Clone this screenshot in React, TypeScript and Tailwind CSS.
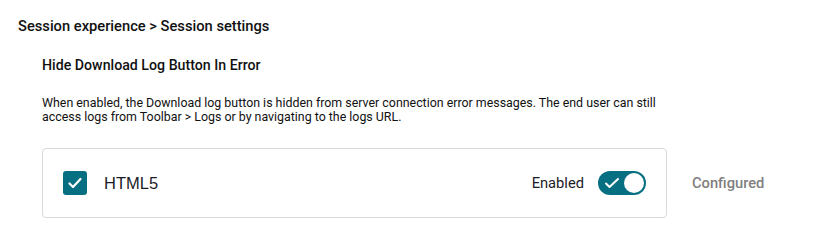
export default function App() {
  return (
    <div className="h-[244px] w-[835px] bg-white font-['Roboto',sans-serif] text-[#111]">
      <div className="px-[18px] pt-[16px]">
        <h1 className="text-[14.7px] font-medium leading-[20px]">
          Session experience &gt; Session settings
        </h1>
        <div className="pl-[24px] pt-[19px]">
          <h2 className="text-[14.2px] font-medium leading-[20px]">
            Hide Download Log Button In Error
          </h2>
          <p className="mt-[21px] text-[12.4px] leading-[14px]">
            When enabled, the Download log button is hidden from server connection error messages. The end user can still
            <br />
            access logs from Toolbar &gt; Logs or by navigating to the logs URL.
          </p>
          <div className="mt-[24px] flex items-center">
            <div className="flex h-[70px] w-[625px] items-center rounded-[4px] border border-[#d9d9d9] pl-[20px] pr-[20px]">
              <span className="flex h-[24px] w-[24px] items-center justify-center rounded-[3px] bg-[#076f82]">
                <svg width="18" height="18" viewBox="0 0 18 18" fill="none">
                  <path d="M3.5 9.5l3.5 3.5L14.5 5" stroke="white" strokeWidth="2.2" strokeLinecap="round" strokeLinejoin="round" />
                </svg>
              </span>
              <span className="ml-[17px] font-['Liberation_Sans',sans-serif] text-[16.5px] text-[#1c1c28]">HTML5</span>
              <span className="ml-auto text-[14.7px] text-[#1c1c28]">Enabled</span>
              <span className="ml-[14px] flex h-[24px] w-[48px] items-center justify-between rounded-full bg-[#076f82] pl-[5px] pr-[2px]">
                <svg width="18" height="18" viewBox="0 0 18 18" fill="none">
                  <path d="M3 9.5l3.5 3.5L15 5" stroke="white" strokeWidth="2" strokeLinecap="round" strokeLinejoin="round" />
                </svg>
                <span className="h-[20px] w-[20px] rounded-full bg-white" />
              </span>
            </div>
            <span className="ml-[25px] text-[14.7px] font-medium text-[#7f7f7f]">Configured</span>
          </div>
        </div>
      </div>
    </div>
  );
}
